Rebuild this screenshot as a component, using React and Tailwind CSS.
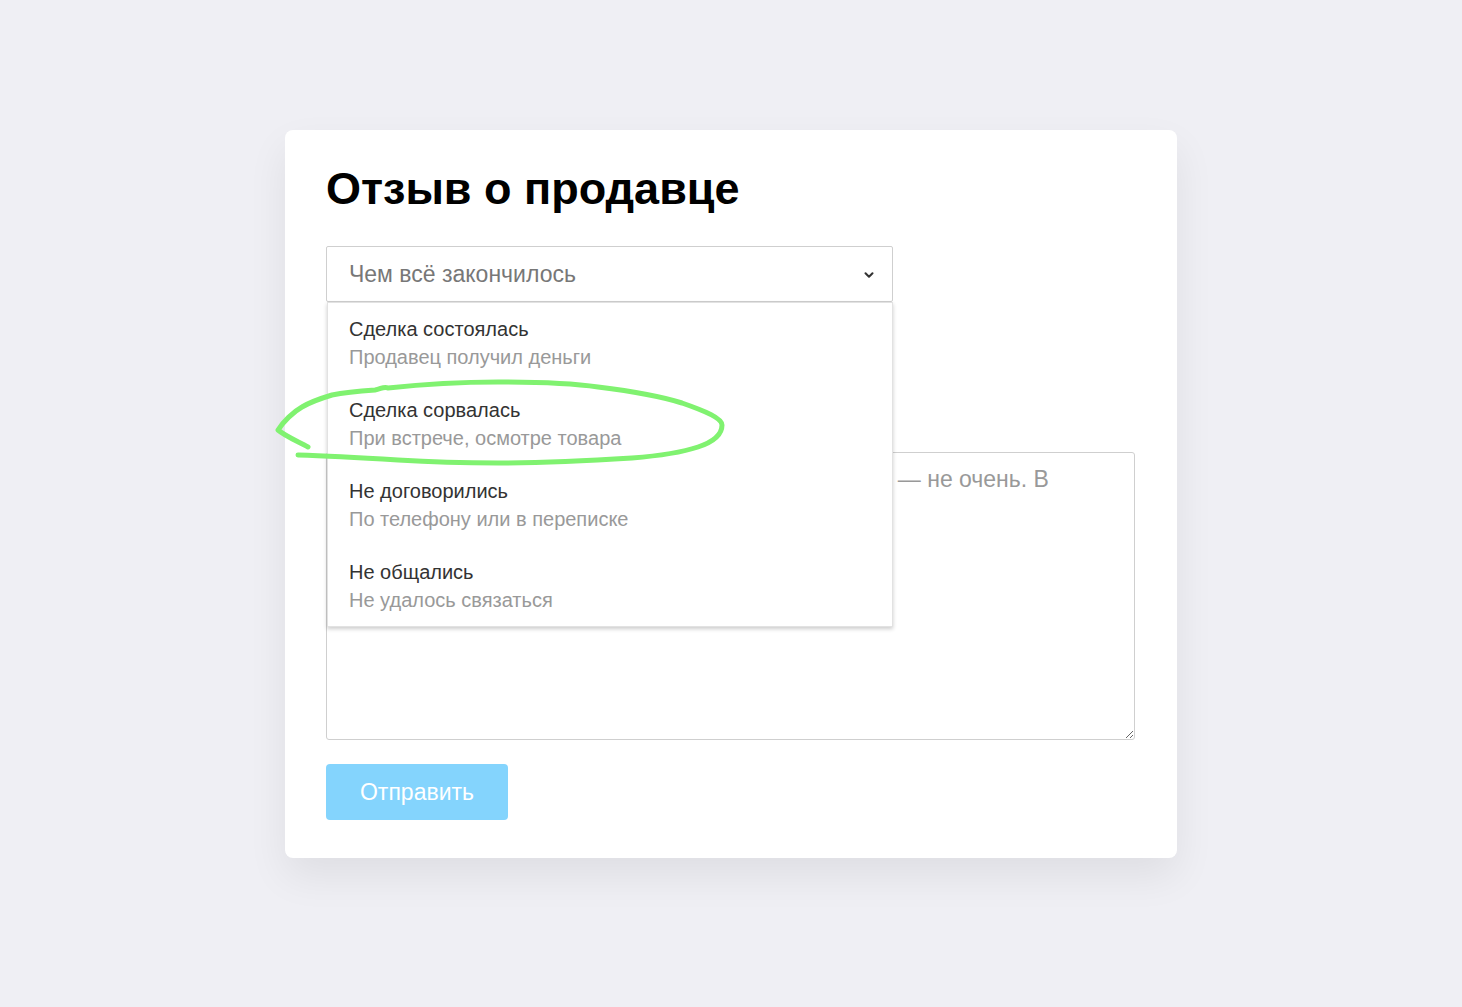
import { ChevronDown } from 'lucide-react';

const OPTIONS = [
  { title: 'Сделка состоялась', sub: 'Продавец получил деньги' },
  { title: 'Сделка сорвалась', sub: 'При встрече, осмотре товара' },
  { title: 'Не договорились', sub: 'По телефону или в переписке' },
  { title: 'Не общались', sub: 'Не удалось связаться' },
];

export default function App() {
  return (
    <div className="min-h-screen bg-[#efeff4] flex justify-center pt-[130px] [font-family:'Liberation_Sans',Arial,sans-serif]">
      <div className="relative w-[892px] h-[728px] bg-white rounded-lg shadow-[0_18px_40px_rgba(0,0,0,0.07)] px-[41px] pt-[32px]">
        <h1 className="text-[45px] leading-[53px] font-bold text-black">Отзыв о продавце</h1>

        <div className="relative mt-[31px] w-[567px]">
          <div className="h-[56px] border border-[#cfcfcf] rounded-[2px] flex items-center justify-between pl-[22px] pr-[16px] bg-white">
            <span className="text-[23px] text-[#777]">Чем всё закончилось</span>
            <ChevronDown size={14} strokeWidth={3.5} className="text-[#333] mt-[1px]" />
          </div>

          <div className="absolute left-[1px] right-0 top-[56px] z-10 bg-white border border-[#e2e2e2] shadow-[0_2px_4px_rgba(0,0,0,0.2)]">
            {OPTIONS.map(o => (
              <div key={o.title} className="h-[81px] px-[21px] pt-[12px] last:h-[80px]">
                <div className="text-[20px] leading-[28px] text-[#333]">{o.title}</div>
                <div className="text-[20px] leading-[28px] text-[#999]">{o.sub}</div>
              </div>
            ))}
          </div>
        </div>

        <textarea
          className="mt-[150px] block w-[809px] h-[288px] border border-[#cfcfcf] rounded-[3px] pl-[25px] pr-[22px] pt-[12px] text-[23px] leading-[28px] outline-none placeholder:text-[#999] [font-family:'Liberation_Sans',Arial,sans-serif]"
          placeholder="Расскажите, что вам понравилось в покупке, а что — не очень. В следующий раз"
        />

        <button className="mt-[24px] w-[182px] h-[56px] rounded-[4px] bg-[#84d4fd] text-white text-[23px]">Отправить</button>

        <svg className="absolute left-0 top-0 pointer-events-none overflow-visible z-20" width="892" height="728">
          <path
            d="M23 317 C14 312 0 306 -7 300 C-2 292 8 282 17 277 C27 271 37 268 47 265 C62 262 76 261 90 260 C96 259 99 256 103 258 C140 254 175 252 213 252 C250 252 285 253 313 257 C345 261 375 266 397 273 C420 281 437 288 437 295 C437 305 428 312 413 317 C395 323 372 326 347 328 C300 331 260 333 213 333 C180 333 145 332 113 330 C80 328 45 326 13 325"
            fill="none"
            stroke="#80f270"
            strokeWidth="5"
            strokeLinecap="round"
            strokeLinejoin="round"
          />
        </svg>
      </div>
    </div>
  );
}
